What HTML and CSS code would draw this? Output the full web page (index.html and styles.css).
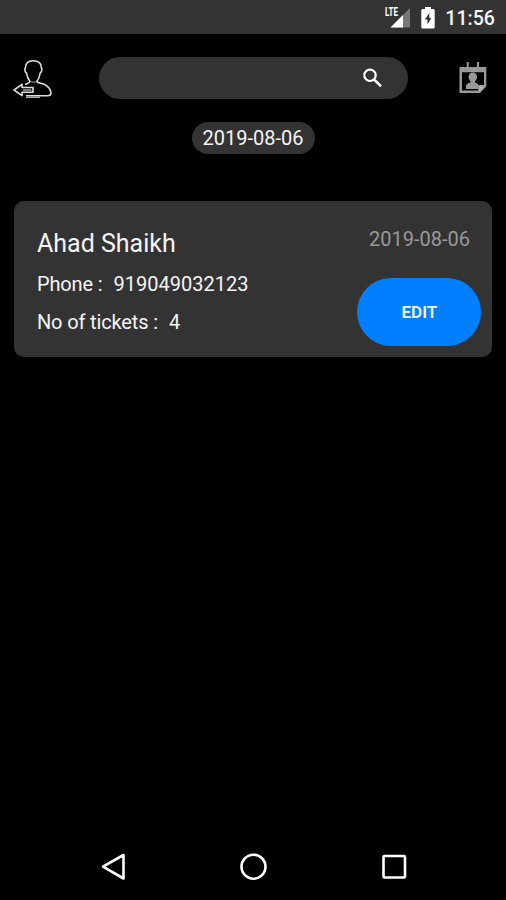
FILE: index.html
```html
<!DOCTYPE html>
<html lang="en">
<head>
  <meta charset="UTF-8" />
  <title>Bookings</title>
  <meta name="viewport" content="width=device-width, initial-scale=1.0" />
  <link rel="stylesheet" href="styles.css">
</head>
<body>
  <div class="screen">
    <div class="status-bar">
      <svg class="signal" width="28" height="24" viewBox="0 0 28 24">
        <path d="M26 4V23.500H6.500Z" fill="#777"/>
        <path d="M19 11V23.500H6.500Z" fill="#fff"/>
        <path d="M0 0H14.500V13H0Z" fill="#333"/>
        <text x="1" y="12" textLength="13" lengthAdjust="spacingAndGlyphs">LTE</text>
      </svg>
      <svg class="battery" width="14" height="22" viewBox="0 0 14 22">
        <path d="M4 0H10V2H12.500Q13.700 2 13.700 3.500V20Q13.700 21.500 12.500 21.500H1.500Q0.300 21.500 0.300 20V3.500Q0.300 2 1.500 2H4Z" fill="#fff"/>
        <path d="M8.300 6L3.800 12.500H6.500V17.500L10.300 11H8.300Z" fill="#333"/>
      </svg>
      <span class="clock">11:56</span>
    </div>

    <div class="header">
      <svg class="logout" width="40" height="42" viewBox="0 0 40 42" fill="none" stroke="#ddd" stroke-width="1.600" stroke-linejoin="round">
        <path d="M12 27.500C14 26.500 16.300 26.300 17 24.500C15.500 22.500 14 19.500 13.500 16C11.600 15 11.500 12 12.500 10.500C12.500 5.500 15.500 3.700 20.300 3.700C25.200 3.700 28.300 5.500 28.300 10.500C29.200 12 29 15 27.200 16C26.700 19.500 25.500 22.500 23.800 24.500C25 26.300 28 26 31 27.300C35 29 37.500 32 38 36C38 38 37 38.800 34.500 38.800H13"/>
        <path d="M17 24.300C19 25.500 21.800 25.500 23.800 24.300" stroke="#aaa" stroke-width="1"/>
        <path d="M1 33L9 27.300V30.500H20V35.300H9V38.700Z"/>
        <path d="M10 33H18.500" stroke="#999"/>
        <path d="M13 40.300H27" stroke="#bbb" stroke-width="1.200"/>
      </svg>
      <div class="search">
        <svg width="22" height="22" viewBox="0 0 22 22" fill="none" stroke="#fff" stroke-width="2.200">
          <circle cx="9" cy="8.300" r="5.700"/>
          <path d="M13 12.300L20 19.300" stroke-width="2.600"/>
        </svg>
      </div>
      <svg class="calendar" width="28" height="32" viewBox="0 0 28 32">
        <path d="M8.700 0V7M19 0V7" stroke="#999" stroke-width="2"/>
        <path d="M0.500 5H27.300V24.500L21 31H0.500ZM3 10.200V28.500H19.200V23H25V10.200Z" fill="#999" fill-rule="evenodd"/>
        <path d="M20.300 24.300H25.300L20.300 29.500Z" fill="#bbb"/>
        <ellipse cx="13.800" cy="15" rx="4.300" ry="4.500" fill="#999"/>
        <path d="M11.500 18H16V20.500Q19.500 21.500 19.500 24V27H7V24Q7.300 21.500 11.500 20.500Z" fill="#999"/>
      </svg>
    </div>

    <div class="selected-date">2019-08-06</div>

    <div class="card">
      <div class="details">
        <div class="name">Ahad Shaikh</div>
        <div class="row"><span class="label">Phone :</span><span>919049032123</span></div>
        <div class="row"><span class="label">No of tickets :</span><span>4</span></div>
      </div>
      <div class="side">
        <span class="date">2019-08-06</span>
        <button class="edit">EDIT</button>
      </div>
    </div>

    <div class="nav-bar">
      <svg width="28" height="28" viewBox="0 0 28 28"><path d="M23.500 2V25.500L3 13.700Z"/></svg>
      <svg width="28" height="28" viewBox="0 0 28 28"><circle cx="13.500" cy="13.700" r="12"/></svg>
      <svg width="28" height="28" viewBox="0 0 28 28"><rect x="3.500" y="3" width="21.500" height="21.500" rx="1"/></svg>
    </div>
  </div>
</body>
</html>
```

FILE: styles.css
```css
body {
  font-family: Roboto, sans-serif;
  background: #000;
  color: #f5f5f5;
  margin: 0;
}
.screen {
  display: flex;
  flex-direction: column;
  height: 900px;
}
.status-bar {
  display: flex;
  justify-content: flex-end;
  box-sizing: border-box;
  height: 34px;
  padding: 4px 11px 0 0;
  background: #333;
}
.signal text {
  font-size: 12px;
  font-weight: 700;
  fill: #fff;
}
.battery {
  margin: 3px 10px 0 9px;
}
.clock {
  font-size: 19.6px;
  font-weight: 500;
  line-height: 29px;
}
.header {
  display: flex;
  align-items: flex-start;
  padding: 23px 19px 0 13px;
}
.logout {
  margin-right: 46px;
}
.search {
  display: flex;
  align-items: center;
  justify-content: flex-end;
  box-sizing: border-box;
  width: 309px;
  height: 42px;
  padding-right: 25px;
  border-radius: 21px;
  background: #333;
}
.calendar {
  margin: 5px 0 0 auto;
}
.selected-date {
  align-self: center;
  width: 123px;
  height: 32px;
  margin-top: 23px;
  border-radius: 16px;
  background: #333;
  font-size: 20px;
  line-height: 33px;
  text-align: center;
}
.card {
  display: flex;
  justify-content: space-between;
  box-sizing: border-box;
  height: 156px;
  margin: 47px 13.6px 0 14.4px;
  padding: 22px 11px 0 22.6px;
  border-radius: 10px;
  background: #333;
}
.name {
  height: 42px;
  font-size: 25px;
  line-height: 41px;
}
.row {
  display: flex;
  gap: 11px;
  font-size: 20px;
  line-height: 38px;
  white-space: nowrap;
}
.label {
  letter-spacing: -0.14px;
}
.side {
  display: flex;
  flex-direction: column;
  align-items: flex-end;
}
.date {
  margin-right: 11.5px;
  color: #999;
  font-size: 20px;
  line-height: 32px;
}
.edit {
  width: 124px;
  height: 68px;
  margin-top: 23px;
  border: none;
  border-radius: 34px;
  background: #007fff;
  color: #f5f5f5;
  font-family: inherit;
  font-size: 17px;
  font-weight: 600;
}
.nav-bar {
  display: flex;
  justify-content: space-between;
  margin-top: auto;
  padding: 0 98px 19px 100px;
}
.nav-bar svg {
  fill: none;
  stroke: #fff;
  stroke-width: 2.600;
  stroke-linejoin: round;
}
```
